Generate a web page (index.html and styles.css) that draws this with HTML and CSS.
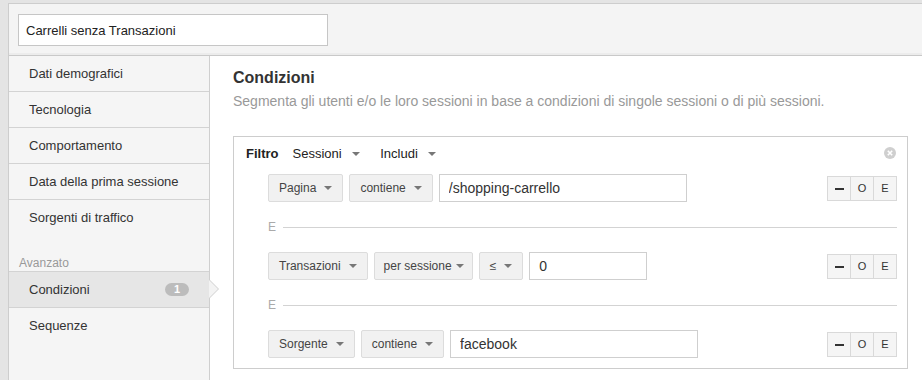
FILE: index.html
```html
<!DOCTYPE html>
<html lang="it">
<head>
    <meta charset="UTF-8">
    <title>Segmento - Condizioni</title>
    <link rel="stylesheet" href="styles.css">
</head>
<body>
    <div class="panel">
        <div class="segment-header">
            <input class="segment-name" type="text" value="Carrelli senza Transazioni">
        </div>
        <div class="editor">
            <ul class="side-nav">
                <li class="nav-item">Dati demografici</li>
                <li class="nav-item">Tecnologia</li>
                <li class="nav-item">Comportamento</li>
                <li class="nav-item">Data della prima sessione</li>
                <li class="nav-item">Sorgenti di traffico</li>
                <li class="nav-group">Avanzato</li>
                <li class="nav-item active">Condizioni <span class="badge">1</span></li>
                <li class="nav-item">Sequenze</li>
            </ul>

            <div class="content">
                <h2>Condizioni</h2>
                <p class="hint">Segmenta gli utenti e/o le loro sessioni in base a condizioni di singole sessioni o di più sessioni.</p>

                <div class="filter-box">
                    <div class="filter-head">
                        <b>Filtro</b>
                        <span class="menu">Sessioni <i class="caret"></i></span>
                        <span class="menu">Includi <i class="caret"></i></span>
                        <svg class="close" width="12" height="12" viewBox="0 0 12 12">
                            <circle cx="6" cy="6" r="6" fill="#cfcfcf"/>
                            <path d="M3.8 3.8 L8.2 8.2 M8.2 3.8 L3.8 8.2" stroke="#fff" stroke-width="1.6"/>
                        </svg>
                    </div>

                    <div class="cond-row">
                        <button class="pick">Pagina <i class="caret"></i></button>
                        <button class="pick">contiene <i class="caret"></i></button>
                        <input class="value wide" type="text" value="/shopping-carrello">
                        <div class="logic">
                            <button class="minus"><i></i></button><button>O</button><button>E</button>
                        </div>
                    </div>

                    <div class="and-sep"><span>E</span></div>

                    <div class="cond-row">
                        <button class="pick">Transazioni <i class="caret"></i></button>
                        <button class="pick tight">per sessione <i class="caret"></i></button>
                        <button class="pick">&le; <i class="caret"></i></button>
                        <input class="value short" type="text" value="0">
                        <div class="logic">
                            <button class="minus"><i></i></button><button>O</button><button>E</button>
                        </div>
                    </div>

                    <div class="and-sep"><span>E</span></div>

                    <div class="cond-row">
                        <button class="pick">Sorgente <i class="caret"></i></button>
                        <button class="pick">contiene <i class="caret"></i></button>
                        <input class="value wide" type="text" value="facebook">
                        <div class="logic">
                            <button class="minus"><i></i></button><button>O</button><button>E</button>
                        </div>
                    </div>
                </div>
            </div>
        </div>
    </div>
</body>
</html>
```

FILE: styles.css
```css
/* General */
body {
    margin: 0;
    padding-top: 3px;
    background: #e4e4e4;
    font-family: 'Liberation Sans', Arial, sans-serif;
    color: #333;
    height: 377px;
    overflow: hidden;
}

.panel {
    margin-left: 8px;
    border-top: 1px solid #cdcdcd;
    border-left: 1px solid #cdcdcd;
    background: #f4f4f4;
    height: 376px;
    display: flex;
    flex-direction: column;
}

/* Header with segment name */
.segment-header {
    height: 31px;
    padding: 10px 9px 10px;
    border-bottom: 1px solid #c9c9c9;
    box-shadow: inset 0 -2px 0 #ececec;
}

.segment-name {
    box-sizing: border-box;
    width: 310px;
    height: 32px;
    margin: 0;
    padding: 0 7px;
    border: 1px solid #c6c6c6;
    background: #fff;
    font-family: inherit;
    font-size: 13px;
    color: #222;
    outline: none;
}

.editor {
    flex: 1;
    display: flex;
}

/* Left navigation */
.side-nav {
    list-style: none;
    margin: 0;
    padding: 0;
    width: 200px;
    flex-shrink: 0;
    background: #f5f5f5;
    border-right: 1px solid #cfcfcf;
}

.nav-item {
    position: relative;
    display: flex;
    align-items: center;
    justify-content: space-between;
    height: 35px;
    padding: 0 20px;
    font-size: 13px;
    color: #333;
    border-bottom: 1px solid #d3d3d3;
}

.nav-item:nth-child(5),
.nav-item:last-child {
    border-bottom: none;
}

.nav-group {
    padding: 21px 10px 1px;
    line-height: 14px;
    font-size: 12px;
    color: #999;
    border-bottom: 1px solid #d3d3d3;
}

.nav-item.active {
    background: #e6e6e6;
}

/* arrow pointing at the content */
.nav-item.active::after,
.nav-item.active::before {
    content: "";
    position: absolute;
    top: 8px;
    border-style: solid;
    border-color: transparent;
}

.nav-item.active::before {
    right: -10px;
    border-width: 9px 0 9px 9px;
    border-left-color: #cfcfcf;
}

.nav-item.active::after {
    right: -9px;
    border-width: 9px 0 9px 9px;
    border-left-color: #f3f3f3;
}

.badge {
    display: inline-block;
    width: 24px;
    height: 13px;
    line-height: 13px;
    border-radius: 7px;
    background: #bcbcbc;
    color: #fff;
    font-size: 11px;
    font-weight: bold;
    text-align: center;
}

/* Main area */
.content {
    flex: 1;
    background: #fff;
    padding: 12px 14px 0 23px;
}

h2 {
    margin: 0;
    font-size: 16px;
    line-height: 20px;
    font-weight: bold;
    color: #333;
}

.hint {
    margin: 4px 0 26px;
    font-size: 14px;
    line-height: 18px;
    color: #999;
}

.filter-box {
    border: 1px solid #cdcdcd;
    padding: 8px 10px 10px 12px;
}

.filter-head {
    display: flex;
    align-items: center;
    height: 16px;
    font-size: 13px;
    color: #222;
    margin-bottom: 13px;
}

.filter-head b {
    margin-right: 14px;
}

.menu {
    margin-right: 20px;
}

.menu .caret {
    margin-left: 7px;
}

.close {
    margin-left: auto;
    margin-right: 1px;
}

.caret {
    display: inline-block;
    width: 0;
    height: 0;
    vertical-align: middle;
    border-left: 4px solid transparent;
    border-right: 4px solid transparent;
    border-top: 4px solid #777;
}

/* Condition rows */
.cond-row {
    display: flex;
    align-items: center;
    gap: 6px;
    padding-left: 22px;
    height: 28px;
}

.pick {
    height: 28px;
    padding: 0 10px;
    display: flex;
    align-items: center;
    gap: 8px;
    border: 1px solid #dcdcdc;
    border-radius: 2px;
    background: #f1f1f1;
    font-family: inherit;
    font-size: 12px;
    color: #444;
}

.pick.tight {
    padding: 0 8px 0 9px;
    gap: 4px;
}

.value {
    box-sizing: border-box;
    height: 28px;
    margin: 0;
    padding: 0 9px;
    border: 1px solid #cfcfcf;
    font-family: inherit;
    font-size: 14px;
    color: #333;
    outline: none;
}

.value.wide {
    width: 248px;
}

.value.short {
    width: 118px;
}

.logic {
    margin-left: auto;
    display: flex;
}

.logic button {
    width: 24px;
    height: 25px;
    padding: 0;
    border: 1px solid #d9d9d9;
    margin-left: -1px;
    background: #f5f5f5;
    font-family: inherit;
    font-size: 11px;
    color: #333;
}

.logic .minus i {
    display: inline-block;
    width: 9px;
    height: 2px;
    background: #333;
    vertical-align: middle;
}

.and-sep {
    height: 50px;
    display: flex;
    align-items: center;
    padding-left: 22px;
    font-size: 12px;
    color: #aaa;
}

.and-sep::after {
    content: "";
    flex: 1;
    height: 1px;
    margin-left: 7px;
    background: #d3d3d3;
}
```
